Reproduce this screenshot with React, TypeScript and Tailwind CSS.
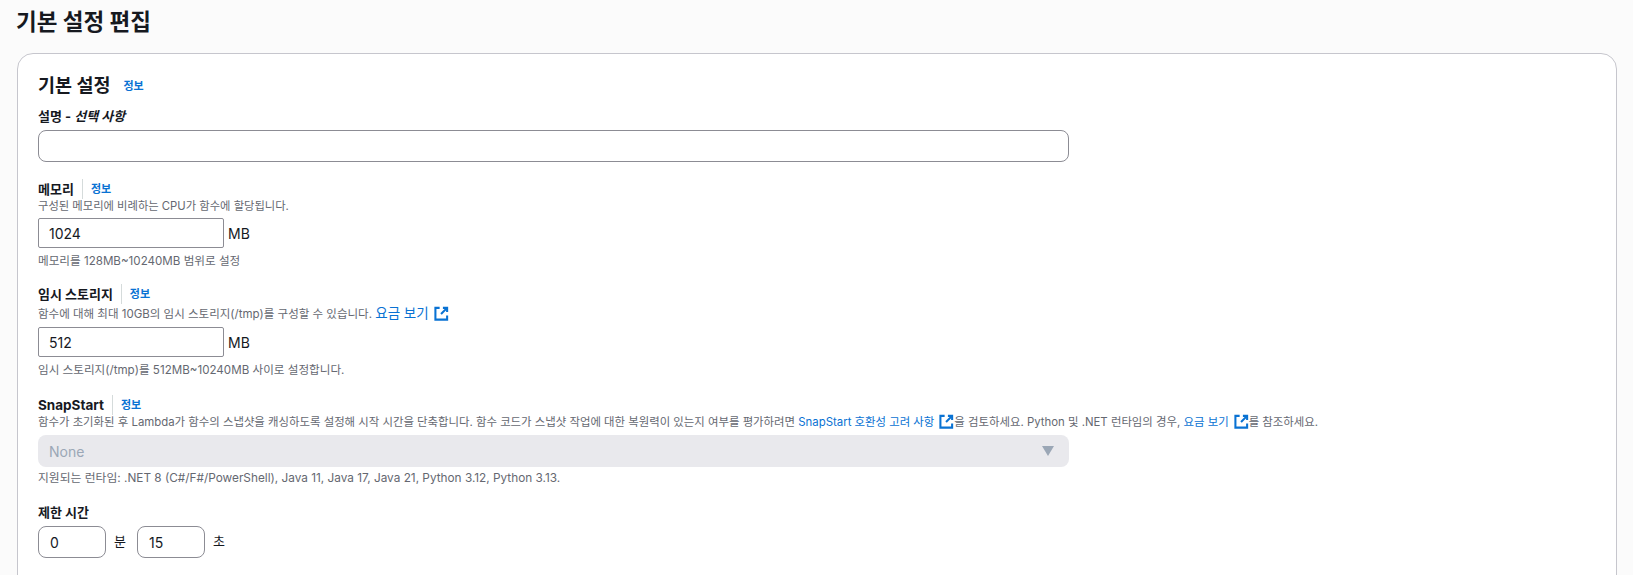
import type { ReactNode } from "react";

function ExternalIcon({ className = "" }: { className?: string }) {
  return (
    <svg viewBox="0 0 16 16" fill="none" stroke="currentColor" strokeWidth="2.2" className={`ml-[5px] inline-block h-[15px] w-[15px] align-[-3px] ${className}`} aria-hidden="true">
      <path d="M6 2H1.5v12.5H14V10" />
      <path d="M9.5 2H14v4.5" />
      <path d="M14 2 7.5 8.5" />
    </svg>
  );
}

function InfoLink({ className = "" }: { className?: string }) {
  return <a className={`text-[11px] leading-4 font-bold text-[#0972d3] ${className}`}>정보</a>;
}

// Label with the little divider and info link next to it
function FieldLabel({ children, className = "text-[13px]" }: { children: ReactNode; className?: string }) {
  return (
    <div className="flex h-5 items-center">
      <span className={`leading-5 font-bold text-[#16191f] ${className}`}>{children}</span>
      <span className="mx-2 h-5 w-px bg-[#d5dbdb]" />
      <InfoLink />
    </div>
  );
}

function Desc({ children, className = "text-[11.5px]" }: { children: ReactNode; className?: string }) {
  return <div className={`leading-4 whitespace-nowrap text-[#656871] ${className}`}>{children}</div>;
}

function SizeInput({ value }: { value: string }) {
  return (
    <div className="mt-[4px] flex items-center">
      <div className="flex h-[30px] w-[186px] items-center rounded-[2px] border border-[#8c8c94] bg-white pl-[10px] text-[14px] text-[#16191f]">
        {value}
      </div>
      <span className="ml-[4px] text-[14px] text-[#16191f]">MB</span>
    </div>
  );
}

function TimeInput({ value }: { value: string }) {
  return (
    <div className="flex h-[32px] w-[68px] items-center rounded-[8px] border border-[#8c8c94] pl-[11px] text-[14px]">
      {value}
    </div>
  );
}

export default function App() {
  return (
    <div className="h-[575px] overflow-hidden bg-[#fbfbfb] pl-[17px] pr-[16px] font-['Inter','Noto_Sans_CJK_KR',sans-serif]">
      <h1 className="-ml-px h-[53px] pt-[4px] text-[22.5px] leading-9 font-bold text-[#16191f]">기본 설정 편집</h1>
      <div className="h-[560px] rounded-t-[16px] border border-[#c6c6cd] bg-white pl-[20px] pt-[19px]">
        <div className="flex h-6 items-center">
          <h2 className="text-[18.5px] leading-6 font-bold text-[#16191f]">기본 설정</h2>
          <InfoLink className="ml-[13px] mt-[2px]" />
        </div>

        <div className="mt-[9px] text-[13px] leading-5 font-bold text-[#16191f]">
          설명 - <i>선택 사항</i>
        </div>
        <div className="mt-[4px] h-[32px] w-[1031px] rounded-[8px] border border-[#8c8c94] bg-white" />

        <div className="mt-[17px]">
          <FieldLabel>메모리</FieldLabel>
          <div className="-mt-px">
            <Desc className="text-[11.3px]">구성된 메모리에 비례하는 CPU가 함수에 할당됩니다.</Desc>
          </div>
          <SizeInput value="1024" />
          <div className="mt-[5px]">
            <Desc className="text-[11.6px]">메모리를 128MB~10240MB 범위로 설정</Desc>
          </div>
        </div>

        <div className="mt-[15px]">
          <FieldLabel>임시 스토리지</FieldLabel>
          <div className="mt-[1px]">
            <Desc>
              함수에 대해 최대 10GB의 임시 스토리지(/tmp)를 구성할 수 있습니다.{" "}
              <a className="text-[13.5px] text-[#0972d3]">
                요금 보기
                <ExternalIcon />
              </a>
            </Desc>
          </div>
          <div className="pt-px">
            <SizeInput value="512" />
          </div>
          <div className="mt-[5px]">
            <Desc className="text-[11.6px]">임시 스토리지(/tmp)를 512MB~10240MB 사이로 설정합니다.</Desc>
          </div>
        </div>

        <div className="mt-[17px]">
          <FieldLabel className="text-[13.5px]">SnapStart</FieldLabel>
          <div className="-mt-px">
            <Desc className="text-[11.4px]">
              함수가 초기화된 후 Lambda가 함수의 스냅샷을 캐싱하도록 설정해 시작 시간을 단축합니다. 함수 코드가 스냅샷 작업에 대한 복원력이 있는지 여부를 평가하려면{" "}
              <a className="text-[#0972d3]">
                SnapStart 호환성 고려 사항
                <ExternalIcon />
              </a>
              을 검토하세요. Python 및 .NET 런타임의 경우,{" "}
              <a className="text-[#0972d3]">
                요금 보기
                <ExternalIcon />
              </a>
              를 참조하세요.
            </Desc>
          </div>
          <div className="mt-[5px] flex h-[32px] w-[1031px] items-center justify-between rounded-[8px] bg-[#e9e9ed] pl-[11px] pr-[15px] text-[14px] text-[#9ba7b6]">
            None
            <svg viewBox="0 0 12 10" className="h-[10px] w-[12px] fill-[#9ba7b6]" aria-hidden="true">
              <path d="M0 0h12L6 10z" />
            </svg>
          </div>
          <div className="mt-[3px]">
            <Desc className="text-[11.8px]">지원되는 런타임: .NET 8 (C#/F#/PowerShell), Java 11, Java 17, Java 21, Python 3.12, Python 3.13.</Desc>
          </div>
        </div>

        <div className="mt-[16px]">
          <div className="text-[13px] leading-5 font-bold text-[#16191f]">제한 시간</div>
          <div className="mt-[4px] flex items-center text-[13px] text-[#16191f]">
            <TimeInput value="0" />
            <span className="ml-[8px] w-[23px]">분</span>
            <TimeInput value="15" />
            <span className="ml-[8px]">초</span>
          </div>
        </div>
      </div>
    </div>
  );
}
